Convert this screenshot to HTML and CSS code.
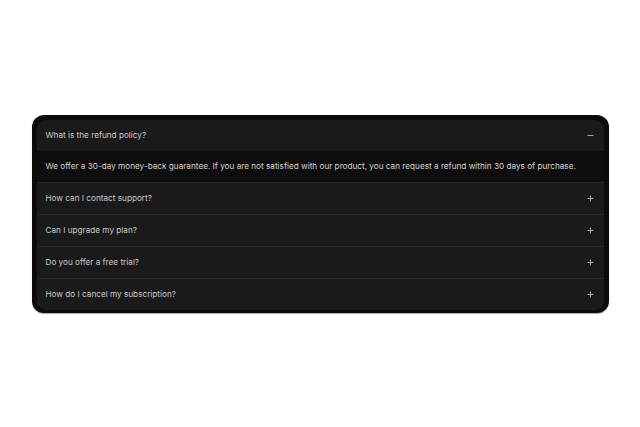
FILE: index.html
```html
<!DOCTYPE html>
<html lang="en">
<head>
<meta charset="utf-8">
<title>FAQ</title>
<link rel="stylesheet" href="styles.css">
</head>
<body>
<div class="stage">
  <div class="frame">
    <div class="faq">
      <div class="item open">
        <div class="q"><span>What is the refund policy?</span>
          <svg class="ic" viewBox="0 0 7 7"><path d="M0.5 3.5h6" /></svg>
        </div>
        <div class="a">We offer a 30-day money-back guarantee. If you are not satisfied with our product, you can request a refund within 30 days of purchase.</div>
      </div>
      <div class="item">
        <div class="q"><span>How can I contact support?</span>
          <svg class="ic" viewBox="0 0 7 7"><path d="M0.5 3.5h6M3.5 0.5v6" /></svg>
        </div>
      </div>
      <div class="item">
        <div class="q"><span>Can I upgrade my plan?</span>
          <svg class="ic" viewBox="0 0 7 7"><path d="M0.5 3.5h6M3.5 0.5v6" /></svg>
        </div>
      </div>
      <div class="item">
        <div class="q"><span>Do you offer a free trial?</span>
          <svg class="ic" viewBox="0 0 7 7"><path d="M0.5 3.5h6M3.5 0.5v6" /></svg>
        </div>
      </div>
      <div class="item">
        <div class="q"><span>How do I cancel my subscription?</span>
          <svg class="ic" viewBox="0 0 7 7"><path d="M0.5 3.5h6M3.5 0.5v6" /></svg>
        </div>
      </div>
    </div>
  </div>
</div>
</body>
</html>
```
FILE: styles.css
```css
html, body {
  margin: 0;
  padding: 0;
  background: #ffffff;
}
body {
  font-family: Inter, "Noto Sans", sans-serif;
}
.stage {
  height: 427px;
  display: flex;
  align-items: center;
  justify-content: center;
}
.frame {
  width: 567px;
  padding: 5px 5px 3px 5px;
  background: #0b0b0b;
  border-radius: 12px;
  box-shadow: 0 1px 1px rgba(0, 0, 0, 0.35);
}
.faq {
  background: #1a1a1a;
  border-radius: 9px;
  overflow: hidden;
}
.item + .item {
  border-top: 1px solid #262626;
}
.q {
  height: 31px;
  display: flex;
  align-items: center;
  justify-content: space-between;
  padding: 0 10px 0 9px;
  font-size: 8.2px;
  color: #c9c9c9;
}
.ic {
  width: 7px;
  height: 7px;
  stroke: #a8a8a8;
  stroke-width: 1;
  fill: none;
}
.a {
  background: #0e0e0e;
  height: 31px;
  display: flex;
  align-items: center;
  padding: 0 9px;
  font-size: 8.2px;
  color: #d4d4d4;
  white-space: nowrap;
}
```
